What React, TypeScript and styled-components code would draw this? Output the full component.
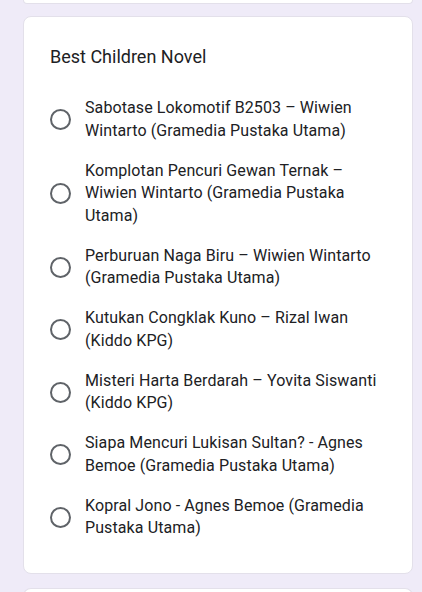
import React from "react";
import styled, { createGlobalStyle } from "styled-components";

const Global = createGlobalStyle`
  html, body {
    margin: 0;
    padding: 0;
    background: #efebf8;
  }
  body {
    font-family: Roboto, "Noto Sans", Arial, sans-serif;
    -webkit-font-smoothing: antialiased;
  }
`;

const Page = styled.div`
  display: flex;
  flex-direction: column;
  gap: 12px;
  padding: 0 9px 0 23px;
  height: 592px;
  overflow: hidden;
  box-sizing: border-box;
`;

const Card = styled.div<{ $cut?: "top" | "bottom" }>`
  background: #ffffff;
  border: 1px solid #e3e0ea;
  border-radius: 8px;
  box-sizing: border-box;
  ${(p) =>
    p.$cut === "top"
      ? `height: 4px; border-top: none; border-top-left-radius: 0; border-top-right-radius: 0; flex: none;`
      : ""}
  ${(p) =>
    p.$cut === "bottom"
      ? `height: 20px; margin-top: 2px; border-bottom: none; border-bottom-left-radius: 0; border-bottom-right-radius: 0; flex: none;`
      : ""}
`;

const QuestionCard = styled(Card)`
  padding: 28px 24px 33px 26px;
  flex: none;
`;

const Title = styled.div`
  font-family: Roboto, "Noto Sans", sans-serif;
  font-size: 18px;
  line-height: 24px;
  color: #202124;
  margin-bottom: 28px;
`;

const Options = styled.div`
  display: flex;
  flex-direction: column;
  gap: 17.5px;
`;

const Option = styled.label`
  display: flex;
  align-items: center;
  gap: 14px;
`;

const Radio = styled.span`
  flex: none;
  width: 17px;
  height: 17px;
  border: 2px solid #5f6368;
  border-radius: 50%;
`;

const Label = styled.span`
  font-size: 16px;
  line-height: 22.5px;
  color: #202124;
  letter-spacing: 0.1px;
`;

const options = [
  "Sabotase Lokomotif B2503 \u2013 Wiwien Wintarto (Gramedia Pustaka Utama)",
  "Komplotan Pencuri Gewan Ternak \u2013 Wiwien Wintarto (Gramedia Pustaka Utama)",
  "Perburuan Naga Biru \u2013 Wiwien Wintarto (Gramedia Pustaka Utama)",
  "Kutukan Congklak Kuno \u2013 Rizal Iwan (Kiddo KPG)",
  "Misteri Harta Berdarah \u2013 Yovita Siswanti (Kiddo KPG)",
  "Siapa Mencuri Lukisan Sultan? - Agnes Bemoe (Gramedia Pustaka Utama)",
  "Kopral Jono - Agnes Bemoe (Gramedia Pustaka Utama)",
];

export default function App() {
  return (
    <>
      <Global />
      <Page>
        <Card $cut="top" />
        <QuestionCard>
          <Title>Best Children Novel</Title>
          <Options>
            {options.map((o) => (
              <Option key={o}>
                <Radio />
                <Label>{o}</Label>
              </Option>
            ))}
          </Options>
        </QuestionCard>
        <Card $cut="bottom" />
      </Page>
    </>
  );
}
